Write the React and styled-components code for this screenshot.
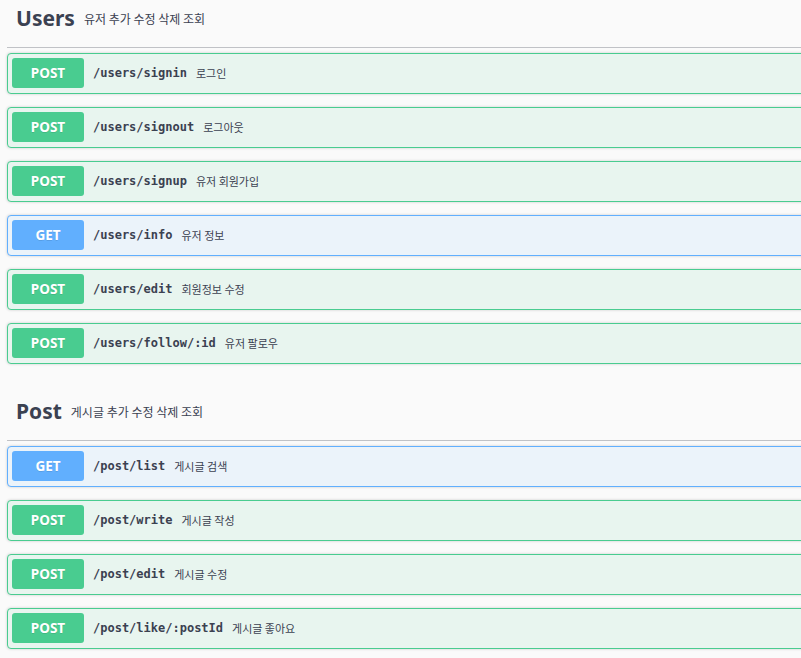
import styled, {createGlobalStyle} from "styled-components";

const GlobalStyle = createGlobalStyle`
    html, body {
        margin: 0;
        padding: 0;
        background: #fafafa;
        overflow: hidden;
    }
    body {
        font-family: "Noto Sans", "Noto Sans CJK KR", sans-serif;
        color: #3b4151;
    }
`;

const sections = [
    {
        name: "Users",
        desc: "유저 추가 수정 삭제 조회",
        ops: [
            {method: "POST", path: "/users/signin", desc: "로그인"},
            {method: "POST", path: "/users/signout", desc: "로그아웃"},
            {method: "POST", path: "/users/signup", desc: "유저 회원가입"},
            {method: "GET", path: "/users/info", desc: "유저 정보"},
            {method: "POST", path: "/users/edit", desc: "회원정보 수정"},
            {method: "POST", path: "/users/follow/:id", desc: "유저 팔로우"}
        ]
    },
    {
        name: "Post",
        desc: "게시글 추가 수정 삭제 조회",
        ops: [
            {method: "GET", path: "/post/list", desc: "게시글 검색"},
            {method: "POST", path: "/post/write", desc: "게시글 작성"},
            {method: "POST", path: "/post/edit", desc: "게시글 수정"},
            {method: "POST", path: "/post/like/:postId", desc: "게시글 좋아요"}
        ]
    }
];

const colors = {
    POST: {main: "#49cc90", bg: "#e8f5ef"},
    GET: {main: "#61affe", bg: "#ebf3fa"}
};

export default function App() {
    return (
        <>
            <GlobalStyle/>
            <Page>
                {sections.map((sec) => (
                    <Section key={sec.name}>
                        <TagHeader>
                            <TagName>{sec.name}</TagName>
                            <TagDesc>{sec.desc}</TagDesc>
                        </TagHeader>
                        {sec.ops.map((op) => (
                            <Block key={op.path} $method={op.method}>
                                <Method $method={op.method}>{op.method}</Method>
                                <Path>{op.path}</Path>
                                <Desc>{op.desc}</Desc>
                            </Block>
                        ))}
                    </Section>
                ))}
            </Page>
        </>
    )
}

const Page = styled.div`
    width: 1100px;
    padding-left: 7px;
    display: flex;
    flex-direction: column;
    gap: 16px;
`;

const Section = styled.section`
    display: flex;
    flex-direction: column;
`;

const TagHeader = styled.div`
    display: flex;
    align-items: center;
    height: 48px;
    box-sizing: border-box;
    padding: 0 18px 11px 9px;
    border-bottom: 1px solid rgba(59, 65, 81, 0.3);
    margin-bottom: 5px;
`;

const TagName = styled.span`
    font-family: "Noto Sans", sans-serif;
    font-weight: 700;
    font-size: 21px;
    color: #3b4151;
`;

const TagDesc = styled.span`
    font-family: "Noto Sans CJK KR", "Noto Sans", sans-serif;
    font-size: 12px;
    margin-left: 9px;
    color: #3b4151;
`;

const Block = styled.div`
    display: flex;
    align-items: center;
    box-sizing: border-box;
    height: 41px;
    padding: 4px 4px 5px;
    margin-bottom: 13px;
    border: 1px solid ${(p) => colors[p.$method].main};
    background: ${(p) => colors[p.$method].bg};
    border-radius: 4px;
    box-shadow: 0 0 3px rgba(0, 0, 0, 0.19);
`;

const Method = styled.span`
    display: flex;
    align-items: center;
    justify-content: center;
    width: 72px;
    height: 30px;
    border-radius: 3px;
    background: ${(p) => colors[p.$method].main};
    color: #fff;
    font-family: "Noto Sans", sans-serif;
    font-weight: 700;
    font-size: 13.5px;
    text-shadow: 0 1px 0 rgba(0, 0, 0, 0.1);
`;

const Path = styled.span`
    font-family: "DejaVu Sans Mono", monospace;
    font-weight: 700;
    font-size: 12px;
    color: #3b4151;
    margin-left: 9px;
`;

const Desc = styled.span`
    font-family: "Noto Sans CJK KR", "Noto Sans", sans-serif;
    font-size: 11px;
    color: #3b4151;
    margin-left: 9px;
`;
